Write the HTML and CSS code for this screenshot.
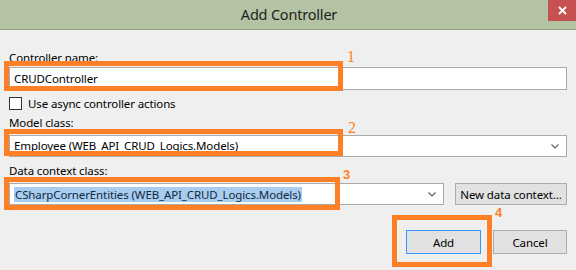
FILE: index.html
```html
<!DOCTYPE html>
<html>
<head>
<meta charset="utf-8">
<link rel="stylesheet" href="styles.css">
</head>
<body>
<div class="dialog">
  <div class="titlebar">
    <span class="title">Add Controller</span>
    <span class="close">
      <svg width="9" height="9" viewBox="0 0 9 9"><path d="M1 1L8 8M8 1L1 8" stroke="#fff" stroke-width="1.8"/></svg>
    </span>
  </div>
  <div class="content">
    <div class="label l1">Controller name:</div>
    <div class="textbox">CRUDController</div>
    <label class="check-row">
      <span class="checkbox"></span>
      <span>Use async controller actions</span>
    </label>
    <div class="label l2">Model class:</div>
    <div class="combo wide">
      <span>Employee (WEB_API_CRUD_Logics.Models)</span>
      <svg class="arrow" width="8" height="5" viewBox="0 0 8 5"><path d="M0.5 0.5L4 4L7.5 0.5" fill="none" stroke="#606060" stroke-width="1.2"/></svg>
    </div>
    <div class="label l3">Data context class:</div>
    <div class="row">
      <div class="combo narrow">
        <span class="selected">CSharpCornerEntities (WEB_API_CRUD_Logics.Models)</span>
        <svg class="arrow" width="8" height="5" viewBox="0 0 8 5"><path d="M0.5 0.5L4 4L7.5 0.5" fill="none" stroke="#606060" stroke-width="1.2"/></svg>
      </div>
      <button class="btn newctx">New data context...</button>
    </div>
    <div class="actions">
      <button class="btn add">Add</button>
      <button class="btn cancel">Cancel</button>
    </div>
  </div>

  <div class="mark m1"></div>
  <div class="mark m2"></div>
  <div class="mark m3"></div>
  <div class="mark m4"></div>
  <span class="num n1">1</span>
  <span class="num n2">2</span>
  <span class="num n3">3</span>
  <span class="num n4">4</span>
</div>
</body>
</html>
```
FILE: styles.css
```css
* { box-sizing: border-box; }
html, body { margin: 0; padding: 0; }
body {
  width: 576px;
  height: 270px;
  background: #efefef;
  font-family: "Noto Sans", "Open Sans", sans-serif;
  font-size: 11.5px;
  letter-spacing: -0.12px;
  color: #000;
  overflow: hidden;
}
.dialog {
  position: relative;
  width: 576px;
  height: 270px;
  background: #efefef;
}
.titlebar {
  position: relative;
  height: 30px;
  background: #b3c3a3;
  border-bottom: 1px solid #93a384;
  display: flex;
  align-items: center;
  justify-content: center;
}
.title {
  font-size: 14.5px;
  letter-spacing: -0.2px;
  color: #1f1f1f;
  margin-left: 2px;
  margin-top: -2px;
}
.close {
  position: absolute;
  right: 0;
  top: 0;
  width: 28px;
  height: 21px;
  background: #c75050;
  display: flex;
  align-items: center;
  justify-content: center;
}
.content {
  padding: 0 9px 0 9px;
}
.label {
  line-height: 15px;
  height: 15px;
}
.l1 { margin-top: 20px; }
.textbox {
  margin-top: 2px;
  height: 23px;
  background: #fff;
  border: 1px solid #ababab;
  padding: 0 0 0 4px;
  line-height: 21px;
}
.check-row {
  display: flex;
  align-items: center;
  gap: 6px;
  margin-top: 6px;
  height: 15px;
}
.checkbox {
  width: 13px;
  height: 13px;
  background: #fff;
  border: 1px solid #333;
}
.l2 { margin-top: 4px; }
.combo {
  position: relative;
  height: 22px;
  background: #fff;
  border: 1px solid #ababab;
  line-height: 20px;
  padding-left: 4px;
  display: flex;
  align-items: center;
}
.combo .arrow {
  position: absolute;
  right: 7px;
  top: 8px;
}
.wide { margin-top: 5px; }
.l3 { margin-top: 6px; }
.row {
  display: flex;
  gap: 11px;
  margin-top: 5px;
}
.narrow { width: 435px; }
.selected {
  background: #a8cdf0;
  color: #13293d;
  line-height: 15px;
  padding: 0 1px;
}
.btn {
  font-family: inherit;
  font-size: 11.5px;
  letter-spacing: -0.12px;
  background: #e1e1e1;
  border: 1px solid #adadad;
  color: #000;
  padding: 0;
  height: 22px;
}
.newctx { width: 112px; }
.actions {
  display: flex;
  justify-content: flex-end;
  gap: 12px;
  margin-top: 25px;
}
.add { width: 75px; height: 24px; border-color: #3399ff; }
.cancel { width: 74px; height: 24px; }

.mark {
  position: absolute;
  border: 5px solid #ff7f27;
}
.m1 { left: 4px; top: 61px; width: 339px; height: 30px; }
.m2 { left: 4px; top: 129px; width: 339px; height: 27px; }
.m3 { left: 4px; top: 177px; width: 336px; height: 33px; }
.m4 { left: 392px; top: 215px; width: 100px; height: 52px; }
.num {
  position: absolute;
  color: #ff7f27;
  font-family: "Liberation Serif", serif;
  font-size: 16px;
  line-height: 13px;
  letter-spacing: 0;
}
.n1 { left: 347px; top: 50px; }
.n2 { left: 348px; top: 121px; }
.n3 { left: 343px; top: 169px; font-family: "Liberation Sans", sans-serif; font-weight: bold; font-size: 13px; line-height: 11px; }
.n4 { left: 495px; top: 207px; font-family: "Liberation Sans", sans-serif; font-weight: bold; font-size: 13px; line-height: 11px; }
```
